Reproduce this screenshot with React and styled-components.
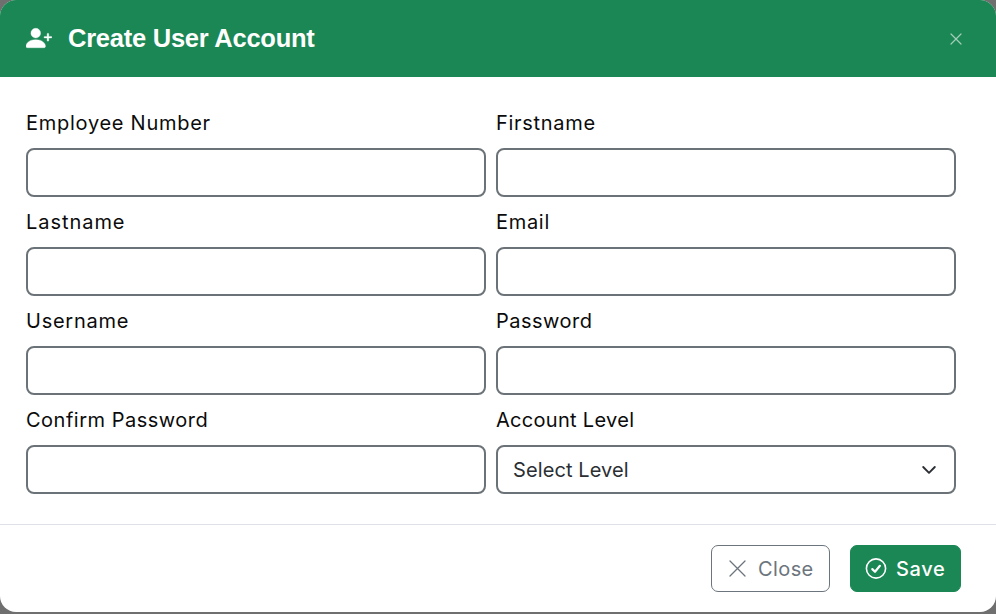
import React from 'react';
import styled, { createGlobalStyle } from 'styled-components';
import { BsPersonPlusFill } from 'react-icons/bs';

const GlobalStyle = createGlobalStyle`
  * { box-sizing: border-box; }
  body { margin: 0; background: #6f6f6f; overflow: hidden; }
`;

const Modal = styled.form`
  display: flex;
  flex-direction: column;
  width: 996px;
  height: 612px;
  overflow: hidden;
  background: #fff;
  border-radius: 16px;
  font-family: Inter, 'Open Sans', sans-serif;
  font-size: 20px;
  color: #0b0b0b;
`;

const Header = styled.header`
  display: flex;
  align-items: center;
  height: 77px;
  padding: 0 34px 2px 26px;
  background: #1a8754;
  color: #fff;
`;

const PersonIcon = styled(BsPersonPlusFill)`
  stroke: currentColor;
  stroke-width: 0.2;
  margin-left: -0.5px;
  margin-right: 0.5px;
`;

const Title = styled.h1`
  flex: 1;
  margin: 0 0 0 16px;
  font: bold 25.5px/30px 'Liberation Sans', Arial, sans-serif;
  letter-spacing: -0.25px;
`;

const Dismiss = styled.button`
  display: flex;
  padding: 0;
  margin-top: 2px;
  border: 0;
  background: none;
  color: #fff;
  opacity: 0.6;
`;

const Fields = styled.main`
  display: grid;
  grid-template-columns: 460px 460px;
  grid-auto-rows: 99px;
  column-gap: 10px;
  height: 447px;
  padding: 31px 26px 0;
`;

const Field = styled.label`
  display: flex;
  flex-direction: column;
`;

const Caption = styled.span`
  height: 40px;
  line-height: 30px;
  white-space: nowrap;
  letter-spacing: ${(p) => p.$track || 0}px;
`;

const Input = styled.input`
  width: 100%;
  height: 49px;
  padding: 0 15px;
  border: 2px solid #6c7378;
  border-radius: 8px;
  background: #fff;
  font: inherit;
  outline: 0;
`;

const Select = styled.button`
  display: flex;
  align-items: center;
  justify-content: space-between;
  width: 100%;
  height: 49px;
  padding: 0 17px 0 15px;
  border: 2px solid #6c7378;
  border-radius: 8px;
  background: #fff;
  color: #2b2f33;
  font: inherit;
  letter-spacing: ${(p) => p.$track || 0}px;
`;

const Footer = styled.footer`
  display: flex;
  justify-content: flex-end;
  gap: 20px;
  height: 88px;
  padding: 20px 35px 0 0;
  border-top: 1px solid #dee2e6;
`;

const Action = styled.button`
  display: flex;
  align-items: center;
  width: ${(p) => p.$width}px;
  height: 47px;
  padding: 0 0 0 ${(p) => p.$inset}px;
  border: 1px solid ${(p) => (p.$primary ? '#1a8754' : '#6c757d')};
  border-radius: 7px;
  background: ${(p) => (p.$primary ? '#1a8754' : '#fff')};
  color: ${(p) => (p.$primary ? '#fff' : '#6c757d')};
  font: inherit;
  font-weight: ${(p) => (p.$primary ? 500 : 400)};
  letter-spacing: ${(p) => p.$track || 0}px;
`;

const ActionText = styled.span`
  margin-left: ${(p) => p.$gap}px;
`;

const Cross = ({ size, stroke }) => (
  <svg width={size} height={size} viewBox={`0 0 ${size} ${size}`} fill="none" stroke="currentColor" strokeWidth={stroke} strokeLinecap="round">
    <path d={`M1 1L${size - 1} ${size - 1}M${size - 1} 1L1 ${size - 1}`} />
  </svg>
);

const Chevron = () => (
  <svg width="16" height="10" viewBox="0 0 16 10" fill="none" stroke="#2b2f33" strokeWidth="1.9" strokeLinecap="round" strokeLinejoin="round">
    <path d="M2.2 2L8 7.8 13.8 2" />
  </svg>
);

const CheckCircle = () => (
  <svg width="22" height="22" viewBox="0 0 22 22" fill="none" stroke="currentColor" strokeLinecap="round" strokeLinejoin="round">
    <circle cx="11" cy="10.5" r="9.6" strokeWidth="1.6" />
    <path d="M7.3 11.1l2.7 2.7 4.9-6" strokeWidth="2.2" />
  </svg>
);

const fields = [
  { name: 'Employee Number', track: 0.73 },
  { name: 'Firstname', track: 0.7 },
  { name: 'Lastname', track: 0.95 },
  { name: 'Email', track: 0.7 },
  { name: 'Username', track: 0.75 },
  { name: 'Password', track: 0.5 },
  { name: 'Confirm Password', track: 0.5 },
];

export default function App() {
  return (
    <>
      <GlobalStyle />
      <Modal>
        <Header>
          <PersonIcon size={26} />
          <Title>Create User Account</Title>
          <Dismiss type="button" aria-label="Close">
            <Cross size={12} stroke={1.2} />
          </Dismiss>
        </Header>
        <Fields>
          {fields.map(({ name, track }) => (
            <Field key={name}>
              <Caption $track={track}>{name}</Caption>
              <Input type={name.includes('Password') ? 'password' : 'text'} />
            </Field>
          ))}
          <Field as="div">
            <Caption $track={0.3}>Account Level</Caption>
            <Select type="button" $track={0.1}>
              Select Level
              <Chevron />
            </Select>
          </Field>
        </Fields>
        <Footer>
          <Action type="button" $width={119} $inset={17} $track={0.4}>
            <Cross size={17} stroke={1.3} />
            <ActionText $gap={12}>Close</ActionText>
          </Action>
          <Action type="button" $primary $width={111} $inset={14} $track={0.6}>
            <CheckCircle />
            <ActionText $gap={9}>Save</ActionText>
          </Action>
        </Footer>
      </Modal>
    </>
  );
}
